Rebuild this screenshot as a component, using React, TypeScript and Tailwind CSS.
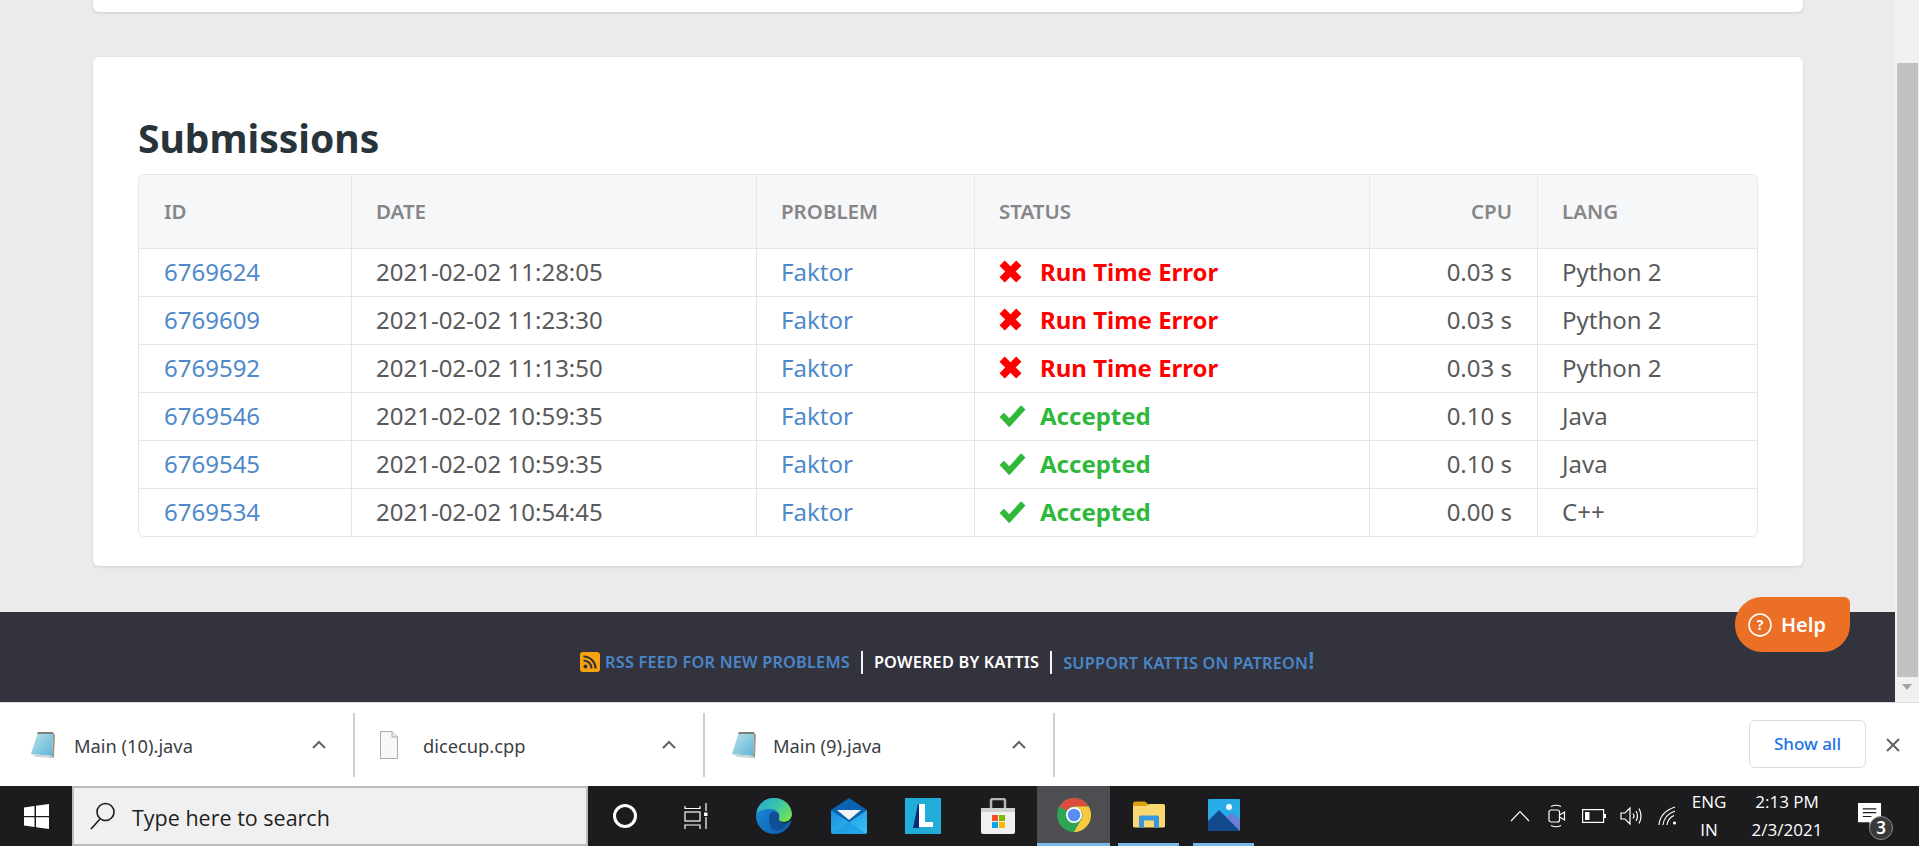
import React from 'react';

const ROWS = [
  { id: '6769624', date: '2021-02-02 11:28:05', ok: false, cpu: '0.03 s', lang: 'Python 2' },
  { id: '6769609', date: '2021-02-02 11:23:30', ok: false, cpu: '0.03 s', lang: 'Python 2' },
  { id: '6769592', date: '2021-02-02 11:13:50', ok: false, cpu: '0.03 s', lang: 'Python 2' },
  { id: '6769546', date: '2021-02-02 10:59:35', ok: true, cpu: '0.10 s', lang: 'Java' },
  { id: '6769545', date: '2021-02-02 10:59:35', ok: true, cpu: '0.10 s', lang: 'Java' },
  { id: '6769534', date: '2021-02-02 10:54:45', ok: true, cpu: '0.00 s', lang: 'C++' },
];

const DOWNLOADS = [
  { name: 'Main (10).java', notepad: true },
  { name: 'dicecup.cpp', notepad: false },
  { name: 'Main (9).java', notepad: true },
];

function CrossIcon() {
  return (
    <svg width="23" height="23" viewBox="0 0 22 22" className="shrink-0">
      <path d="M5.5 0.5 L11 6 L16.5 0.5 L21.5 5.5 L16 11 L21.5 16.5 L16.5 21.5 L11 16 L5.5 21.5 L0.5 16.5 L6 11 L0.5 5.5 Z" fill="#ff0000" />
    </svg>
  );
}

function CheckIcon() {
  return (
    <svg width="27" height="24" viewBox="0 0 25 22" className="shrink-0">
      <path d="M0.5 12 L4.5 8 L9.5 13 L20.5 1 L24.5 5 L9.5 21.5 Z" fill="#2fb83c" />
    </svg>
  );
}

function Chevron() {
  return (
    <svg width="14" height="9" viewBox="0 0 14 9">
      <path d="M1 8 L7 2 L13 8" fill="none" stroke="#5f6368" strokeWidth="2" />
    </svg>
  );
}

function NotepadIcon() {
  return (
    <svg width="26" height="28" viewBox="0 0 26 28">
      <defs>
        <linearGradient id="np" x1="0" y1="0" x2="1" y2="1">
          <stop offset="0" stopColor="#b9e4ea" />
          <stop offset="1" stopColor="#5fb4d6" />
        </linearGradient>
      </defs>
      <path d="M9 1 L24 1 L23 25 L2 23 Z" fill="url(#np)" />
      <path d="M24 1 L26 4 L25 27 L20 27 L23 25 Z" fill="#9a9a92" />
      <path d="M9 1 L24 1 L24 3 L8 3 Z" fill="#7f7f78" />
      <path d="M2 23 L23 25 L25 27 L8 26 Z" fill="#c9d3d6" />
    </svg>
  );
}

function FileIcon() {
  return (
    <svg width="18" height="28" viewBox="0 0 18 28">
      <path d="M0.5 0.5 L12 0.5 L17.5 6 L17.5 27.5 L0.5 27.5 Z" fill="#f7f8f8" stroke="#a8abad" />
      <path d="M12 0.5 L12 6 L17.5 6" fill="#e6e8e9" stroke="#a8abad" />
    </svg>
  );
}

function WindowsLogo() {
  return (
    <svg width="25" height="25" viewBox="0 0 25 25">
      <path d="M0 3.5 L10.5 2 L10.5 12 L0 12 Z M12 1.8 L25 0 L25 12 L12 12 Z M0 13.2 L10.5 13.2 L10.5 23 L0 21.5 Z M12 13.2 L25 13.2 L25 25 L12 23.2 Z" fill="#ffffff" />
    </svg>
  );
}

function EdgeIcon() {
  return (
    <svg width="36" height="36" viewBox="0 0 36 36">
      <defs>
        <linearGradient id="edgeA" x1="0" y1="0" x2="1" y2="0.6">
          <stop offset="0" stopColor="#2aa5d8" />
          <stop offset="0.55" stopColor="#38c4a8" />
          <stop offset="1" stopColor="#6fe05a" />
        </linearGradient>
        <linearGradient id="edgeB" x1="0" y1="0" x2="1" y2="1">
          <stop offset="0" stopColor="#1b8fdc" />
          <stop offset="1" stopColor="#0c5aa8" />
        </linearGradient>
      </defs>
      <circle cx="18" cy="18" r="18" fill="url(#edgeB)" />
      <path d="M0.5 15 C2 5 10 0 18 0 C28 0 36 7 36 17 C36 22 32 25 28 25 C24 25 22 23 23 20 C24 15 20 11 14 11 C8 11 3 13 0.5 15 Z" fill="url(#edgeA)" />
      <path d="M13 20 C13 14 18 12 22 15 C24 17 23 20 23 21 C23 25 27 26 31 25 C27 33 20 34 16 31 C14 28 13 24 13 20 Z" fill="#0f4f96" />
      <path d="M23 21 C23 24 26 26 31 25 L36 22 L36 17 C35 22 31 24 28 24 C25 24 23 23 23 21 Z" fill="#1c1c1e" />
    </svg>
  );
}

function MailIcon() {
  return (
    <svg width="36" height="36" viewBox="0 0 36 36">
      <defs>
        <linearGradient id="mailA" x1="0" y1="0" x2="1" y2="1">
          <stop offset="0" stopColor="#1a8bdc" />
          <stop offset="1" stopColor="#36c6f6" />
        </linearGradient>
      </defs>
      <path d="M0 12 L18 0 L36 12 L18 24 Z" fill="#0a63b0" />
      <path d="M6 12 L30 12 L18 22 Z" fill="#f2f2f2" />
      <path d="M0 12 L18 24 L36 12 L36 34 Q36 36 34 36 L2 36 Q0 36 0 34 Z" fill="url(#mailA)" />
      <path d="M18 24 L36 36 L0 36 Z" fill="#1e9be3" opacity="0.7" />
    </svg>
  );
}

function LetterTile() {
  return (
    <svg width="36" height="36" viewBox="0 0 36 36">
      <rect width="36" height="36" fill="#22acd8" />
      <path d="M13 6 L19 6 L14 30 L8 30 Z" fill="#0c2a78" />
      <path d="M14 6 L20 6 L20 24 L28 24 L28 29 L14 29 Z" fill="#ffffff" />
    </svg>
  );
}

function StoreIcon() {
  return (
    <svg width="36" height="36" viewBox="0 0 36 36">
      <path d="M11 10 L11 3 Q11 1 13 1 L23 1 Q25 1 25 3 L25 10" fill="none" stroke="#b5b5b5" strokeWidth="2.5" />
      <path d="M1 10 L35 10 L35 34 Q35 36 33 36 L3 36 Q1 36 1 34 Z" fill="#f0f0f0" />
      <rect x="1" y="10" width="34" height="4" fill="#d0d0d0" />
      <rect x="12" y="17" width="6" height="6" fill="#f25022" />
      <rect x="19" y="17" width="6" height="6" fill="#7fba00" />
      <rect x="12" y="24" width="6" height="6" fill="#00a4ef" />
      <rect x="19" y="24" width="6" height="6" fill="#ffb900" />
    </svg>
  );
}

function ChromeIcon() {
  return (
    <svg width="34" height="34" viewBox="0 0 34 34">
      <circle cx="17" cy="17" r="17" fill="#2fa552" />
      <path d="M2.3 8.5 A17 17 0 0 1 31.7 8.5 L17 8.5 A8.5 8.5 0 0 0 9.6 12.8 Z" fill="#dc4c3e" />
      <path d="M31.7 8.5 A17 17 0 0 1 17 34 L24.4 21.2 A8.5 8.5 0 0 0 24.4 12.8 L17 8.5 Z" fill="#f8c93e" />
      <circle cx="17" cy="17" r="8" fill="#ffffff" />
      <circle cx="17" cy="17" r="6.3" fill="#5a8df2" />
    </svg>
  );
}

function FolderIcon() {
  return (
    <svg width="32" height="28" viewBox="0 0 32 28">
      <path d="M0 3 Q0 0.5 2 0.5 L12 0.5 L15 3 L15 5 L0 5 Z" fill="#dca20f" />
      <path d="M0 5 L13 5 L16 3 L30.5 3 Q32 3 32 5 L32 25 Q32 26.5 30.5 26.5 L1.5 26.5 Q0 26.5 0 25 Z" fill="#f9d86f" />
      <path d="M6 26.5 L6 16 Q6 14.5 7.5 14.5 L24.5 14.5 Q26 14.5 26 16 L26 26.5 L21 26.5 L21 19.5 L11 19.5 L11 26.5 Z" fill="#3a97de" />
    </svg>
  );
}

function PhotosIcon() {
  return (
    <svg width="32" height="32" viewBox="0 0 32 32">
      <rect width="32" height="32" rx="1" fill="#28abe8" />
      <circle cx="21" cy="8" r="3" fill="#ffffff" />
      <path d="M18 18 L24 14 L32 21 L32 32 L20 32 Z" fill="#6a7fd8" />
      <path d="M0 22 L11 11 L26 26 L32 32 L0 32 Z" fill="#134a8c" />
    </svg>
  );
}

function TaskViewIcon() {
  return (
    <svg width="24" height="28" viewBox="0 0 24 28" fill="none" stroke="#ffffff" strokeWidth="1.2">
      <path d="M1 4 L1 6.5 L16 6.5 L16 4" />
      <rect x="1" y="10" width="15" height="9" />
      <path d="M1 27 L1 23 L16 23 L16 27" />
      <path d="M22 1 L22 9 M22 15 L22 27" />
      <rect x="20" y="10.5" width="3.5" height="3.5" fill="#ffffff" stroke="none" />
    </svg>
  );
}

function TrayIcons() {
  return (
    <div className="flex items-center text-white">
      <svg width="20" height="12" viewBox="0 0 20 12" fill="none" stroke="#ffffff" strokeWidth="1.2" className="mr-[18px]">
        <path d="M1 11 L10 1.5 L19 11" />
      </svg>
      <svg width="18" height="24" viewBox="0 0 18 24" fill="none" stroke="#ffffff" strokeWidth="1.2" className="mr-[16px]">
        <rect x="1" y="6" width="10.5" height="12" rx="2" />
        <path d="M11.5 11 L16.5 8 L16.5 16 L11.5 13" />
        <path d="M3 2.5 Q8 0 13 2.5 M3 21.5 Q8 24 13 21.5" />
      </svg>
      <svg width="24" height="14" viewBox="0 0 24 14" className="mr-[14px]">
        <rect x="0.6" y="0.6" width="21" height="12.8" fill="none" stroke="#ffffff" strokeWidth="1.2" />
        <rect x="3" y="3" width="4.5" height="8" fill="#ffffff" />
        <rect x="22" y="5" width="2" height="4" fill="#ffffff" />
      </svg>
      <svg width="22" height="22" viewBox="0 0 22 22" fill="none" stroke="#ffffff" strokeWidth="1.2" className="mr-[16px]">
        <path d="M1 8 L5 8 L10 3 L10 19 L5 14 L1 14 Z" />
        <path d="M13 8.5 Q15 11 13 13.5 M16 6 Q19 11 16 16 M19 3.5 Q23 11 19 18.5" />
      </svg>
      <svg width="20" height="20" viewBox="0 0 20 20" fill="none" stroke="#ffffff" strokeWidth="1.1">
        <path d="M1 19 Q2 6 17 1 M5 19 Q6 9 17 5 M9 19 Q10 12 16 9.5" />
        <circle cx="16.5" cy="17" r="1.6" fill="#ffffff" stroke="none" />
      </svg>
    </div>
  );
}

export default function App() {
  return (
    <div className="h-[846px] w-full flex flex-col overflow-hidden font-['Noto_Sans','Open_Sans',sans-serif]">
      {/* Page and scrollbar */}
      <div className="h-[702px] flex shrink-0 relative">
        <div className="flex-1 flex flex-col bg-[#ebebeb]">
          <div className="ml-[93px] w-[1710px] h-[12px] bg-white rounded-b-[6px] shadow-[0_1px_3px_rgba(0,0,0,0.15)]"></div>

          <div className="ml-[93px] mt-[45px] w-[1710px] h-[509px] bg-white rounded-[6px] shadow-[0_1px_3px_rgba(0,0,0,0.12)] pl-[45px] pt-[54px]">
            <h2 className="text-[39px] leading-[53px] h-[63px] font-bold text-[#29343a]">Submissions</h2>
            <div className="w-[1620px] border border-[#e6e6e6] rounded-[6px] overflow-hidden">
              <table className="w-full table-fixed border-separate border-spacing-0 text-[24px] leading-[32px] text-[#5a5a5a]">
                <colgroup>
                  <col className="w-[212px]" />
                  <col className="w-[405px]" />
                  <col className="w-[218px]" />
                  <col className="w-[395px]" />
                  <col className="w-[168px]" />
                  <col className="w-[220px]" />
                </colgroup>
                <thead>
                  <tr className="h-[73px] bg-[#f6f7f9] text-[20.5px] text-[#868688] text-left">
                    <th className="font-semibold pl-[25px] pr-[24px] pb-[2px]">ID</th>
                    <th className="font-semibold px-[24px] pb-[2px] border-l border-[#e9e9e9]">DATE</th>
                    <th className="font-semibold px-[24px] pb-[2px] border-l border-[#e9e9e9]">PROBLEM</th>
                    <th className="font-semibold px-[24px] pb-[2px] border-l border-[#e9e9e9]">STATUS</th>
                    <th className="font-semibold px-[25px] pb-[2px] border-l border-[#e9e9e9] text-right">CPU</th>
                    <th className="font-semibold px-[24px] pb-[2px] border-l border-[#e9e9e9]">LANG</th>
                  </tr>
                </thead>
                <tbody>
                  {ROWS.map((row) => (
                    <tr key={row.id} className="h-[48px]">
                      <td className="pl-[25px] pr-[24px] pb-[2px] border-t border-[#e6e6e6] text-[#4f89ca]">{row.id}</td>
                      <td className="px-[24px] pb-[2px] border-t border-l border-[#e6e6e6]">{row.date}</td>
                      <td className="px-[24px] pb-[2px] border-t border-l border-[#e6e6e6] text-[#4f89ca]">Faktor</td>
                      <td className="px-[24px] pb-[2px] border-t border-l border-[#e6e6e6]">
                        <div className={row.ok ? 'flex items-center font-bold text-[#2fb83c]' : 'flex items-center font-bold text-[#ff0000]'}>
                          <span className="w-[41px] flex">{row.ok ? <CheckIcon /> : <CrossIcon />}</span>
                          {row.ok ? 'Accepted' : 'Run Time Error'}
                        </div>
                      </td>
                      <td className="px-[25px] pb-[2px] border-t border-l border-[#e6e6e6] text-right">{row.cpu}</td>
                      <td className="px-[24px] pb-[2px] border-t border-l border-[#e6e6e6]">{row.lang}</td>
                    </tr>
                  ))}
                </tbody>
              </table>
            </div>
          </div>

          {/* Footer */}
          <footer className="mt-[46px] h-[90px] bg-[#33333d] pt-[36px] flex justify-center text-[16.3px] leading-[24px] font-semibold tracking-[0.2px]">
            <div className="flex items-center h-[28px]">
              <svg width="20" height="20" viewBox="0 0 20 20" className="mr-[5px]">
                <rect width="20" height="20" rx="3" fill="#f7a30f" />
                <circle cx="5.5" cy="14.5" r="2" fill="#33333d" />
                <path d="M3.5 8.5 A8 8 0 0 1 11.5 16.5 M3.5 4.5 A12 12 0 0 1 15.5 16.5" fill="none" stroke="#33333d" strokeWidth="2.2" />
              </svg>
              <span className="text-[#4a86c8]">RSS FEED FOR NEW PROBLEMS</span>
              <span className="w-[2px] h-[23px] bg-[#f4f4f4] mx-[11px]"></span>
              <span className="text-white">POWERED BY KATTIS</span>
              <span className="w-[2px] h-[23px] bg-[#f4f4f4] mx-[11px]"></span>
              <span className="text-[#4a86c8]">SUPPORT KATTIS ON PATREON<span className="text-[24px] leading-[20px]">!</span></span>
            </div>
          </footer>
        </div>

        {/* Scrollbar */}
        <div className="w-[24px] bg-[#f1f1f1] flex flex-col items-center shrink-0">
          <div className="mt-[63px] w-[21px] h-[614px] bg-[#c1c1c1]"></div>
          <svg width="10" height="6" viewBox="0 0 10 6" className="mt-[7px]">
            <path d="M0 0 L10 0 L5 6 Z" fill="#a3a3a3" />
          </svg>
        </div>

        {/* Help button */}
        <div className="absolute left-[1735px] top-[597px] w-[115px] h-[55px] bg-[#eb7026] rounded-tl-[27px] rounded-tr-[6px] rounded-b-[27px] flex items-center pl-[13px] text-white text-[20px] font-semibold">
          <svg width="24" height="24" viewBox="0 0 24 24" className="mr-[9px]">
            <circle cx="12" cy="12" r="11" fill="none" stroke="#ffffff" strokeWidth="1.6" />
            <text x="12" y="17" textAnchor="middle" fill="#ffffff" fontSize="14" fontWeight="700">?</text>
          </svg>
          Help
        </div>
      </div>

      {/* Downloads bar */}
      <div className="h-[84px] shrink-0 bg-white border-t border-[#dadce0] flex items-center text-[18.3px] text-[#3c4043]">
        {DOWNLOADS.map((item, i) => (
          <div key={item.name} className={i === 0 ? 'w-[355px] h-[64px] flex items-center border-r-2 border-[#cfcfcf]' : 'w-[350px] h-[64px] flex items-center border-r-2 border-[#cfcfcf]'}>
            <span className={i === 0 ? 'w-[74px] pl-[29px] flex' : 'w-[68px] pl-[25px] flex'}>
              {item.notepad ? <NotepadIcon /> : <FileIcon />}
            </span>
            <span className="flex-1 pt-[2px]">{item.name}</span>
            <span className="w-[41px] flex"><Chevron /></span>
          </div>
        ))}
        <div className="flex-1"></div>
        <div className="w-[117px] h-[48px] mb-[2px] border border-[#dadce0] rounded-[6px] flex items-center justify-center text-[17px] font-medium text-[#1a73e8]">Show all</div>
        <svg width="14" height="14" viewBox="0 0 14 14" className="ml-[20px] mr-[19px]">
          <path d="M1 1 L13 13 M13 1 L1 13" stroke="#5f6368" strokeWidth="2" />
        </svg>
      </div>

      {/* Windows taskbar */}
      <div className="h-[60px] shrink-0 bg-[#1c1c1e] flex items-stretch">
        <div className="w-[72px] flex items-center justify-center"><WindowsLogo /></div>
        <div className="w-[516px] bg-[#f0f0f0] border-2 border-[#bdbdbd] flex items-center pl-[16px] text-[21.5px] text-[#1f1f1f] font-['Open_Sans',sans-serif]">
          <svg width="26" height="30" viewBox="0 0 26 30" fill="none" stroke="#1c1c1c" strokeWidth="1.6" className="mr-[16px]">
            <circle cx="15.5" cy="11" r="8.5" />
            <path d="M10 18 L1 28" />
          </svg>
          <span className="pt-[4px]">Type here to search</span>
        </div>
        <div className="w-[74px] flex items-center justify-center">
          <div className="w-[24px] h-[24px] rounded-full border-[3px] border-white"></div>
        </div>
        <div className="w-[74px] flex items-center justify-center pr-[6px]"><TaskViewIcon /></div>
        <div className="w-[75px] flex items-center justify-center"><EdgeIcon /></div>
        <div className="w-[75px] flex items-center justify-center"><MailIcon /></div>
        <div className="w-[75px] flex items-center justify-center pr-[2px]"><LetterTile /></div>
        <div className="w-[76px] flex items-center justify-center pr-[2px]"><StoreIcon /></div>
        <div className="w-[73px] bg-[#4e4e52] border-b-[3px] border-[#76b9ed] flex items-center justify-center"><ChromeIcon /></div>
        <div className="w-[76px] flex items-center justify-center pl-[1px]">
          <div className="w-[61px] h-full border-b-[3px] border-[#76b9ed] flex items-center justify-center"><FolderIcon /></div>
        </div>
        <div className="w-[75px] flex items-center justify-center">
          <div className="w-[61px] h-full border-b-[3px] border-[#76b9ed] flex items-center justify-center"><PhotosIcon /></div>
        </div>

        <div className="flex-1"></div>
        <TrayIcons />
        <div className="w-[60px] ml-[1px] flex flex-col items-center justify-center text-[17px] leading-[28px] text-white font-['Open_Sans',sans-serif]">
          <span>ENG</span>
          <span>IN</span>
        </div>
        <div className="w-[96px] flex flex-col items-center justify-center text-[17px] leading-[28px] text-white font-['Open_Sans',sans-serif]">
          <span>2:13 PM</span>
          <span>2/3/2021</span>
        </div>
        <div className="w-[84px] flex items-center pl-[23px] relative">
          <svg width="24" height="27" viewBox="0 0 25 28">
            <path d="M0 0 L24 0 L24 20 L17 20 L12 26 L12 20 L0 20 Z" fill="#ffffff" />
            <path d="M5 6 L19 6 M5 10 L19 10 M5 14 L14 14" stroke="#1c1c1e" strokeWidth="1.2" />
          </svg>
          <span className="absolute left-[34px] top-[30px] w-[24px] h-[24px] rounded-full bg-[#3a3a3c] border border-[#8a8a8a] flex items-center justify-center text-white text-[17px] font-semibold">3</span>
        </div>
      </div>
    </div>
  );
}
